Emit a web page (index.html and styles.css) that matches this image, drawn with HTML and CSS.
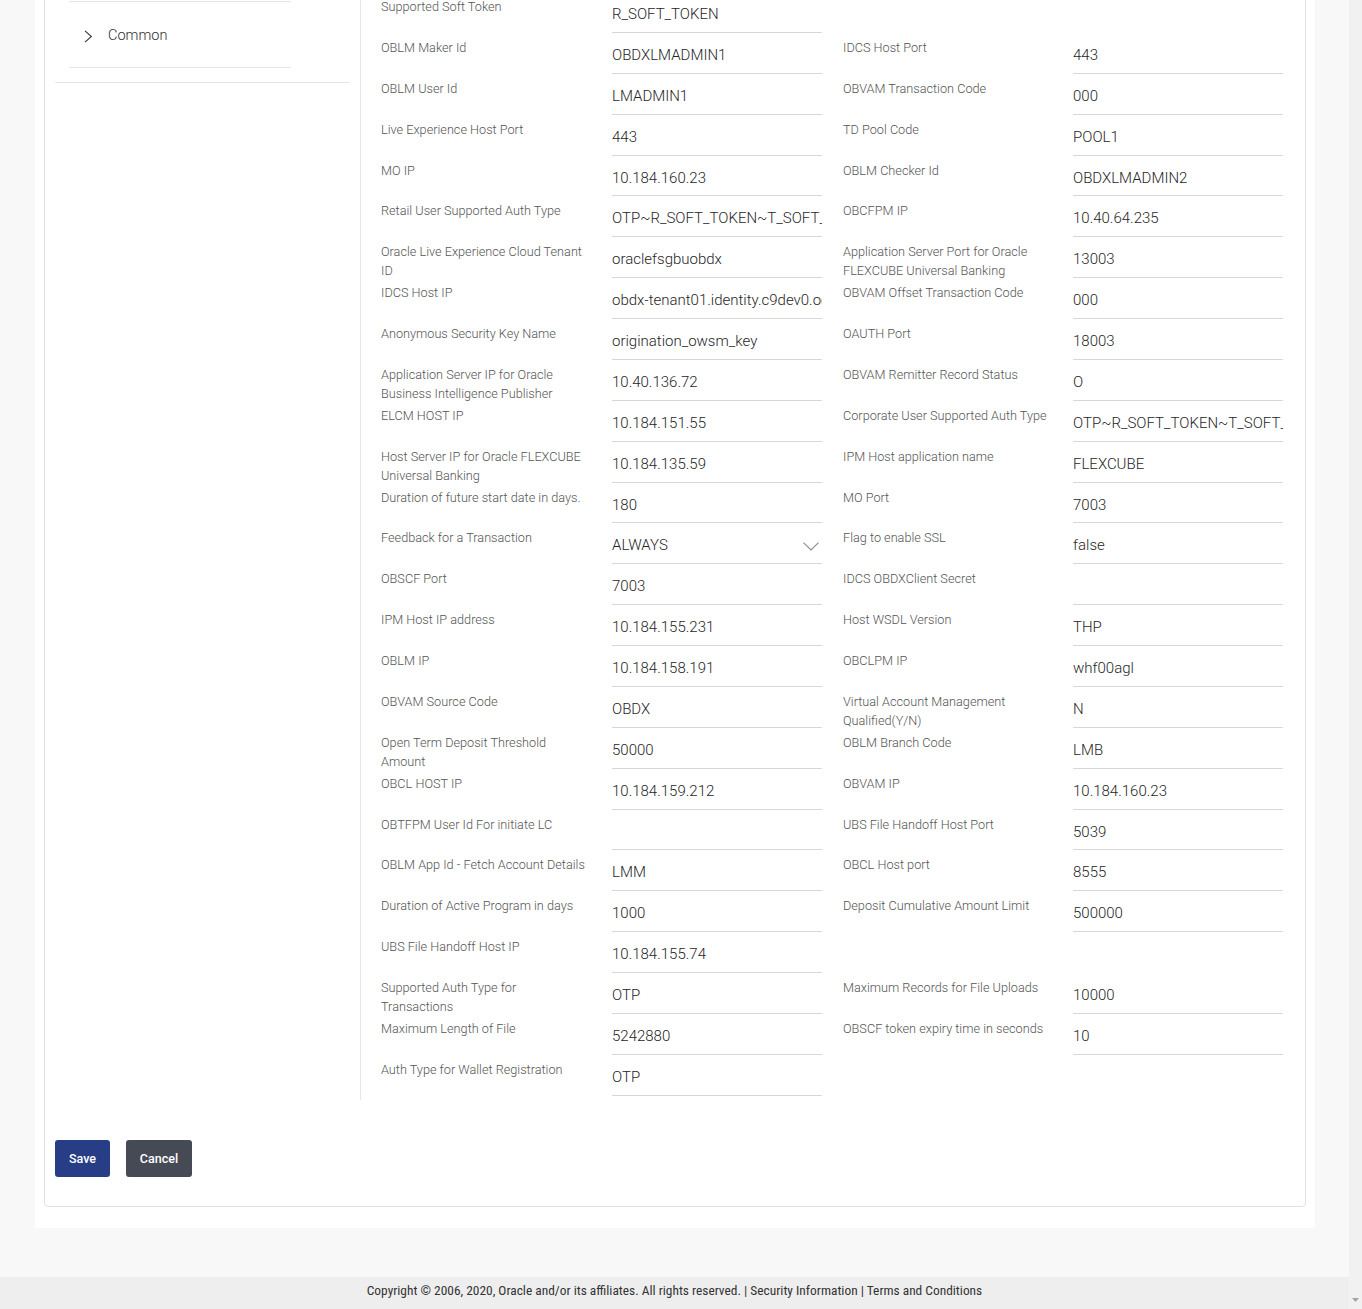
FILE: index.html
```html
<!DOCTYPE html>
<html lang="en">
<head>
<meta charset="utf-8">
<title>System Configuration</title>
<link rel="stylesheet" href="styles.css">
</head>
<body>
<div class="page">
  <div class="shell">
    <div class="card">
      <div class="card-body">
        <aside class="sidebar">
          <div class="menu">
            <div class="menu-item">
              <svg class="chev" width="9" height="13" viewBox="0 0 9 13"><path d="M1 0.8 L7.4 6.5 L1 12.2" fill="none" stroke="#3a3a3a" stroke-width="1.1"/></svg>
              <span>Common</span>
            </div>
          </div>
        </aside>
        <section class="form">
          <div class="field"><div class="label">Supported Soft Token</div><div class="value">R_SOFT_TOKEN</div></div>
          <div class="blank"></div>

          <div class="field"><div class="label">OBLM Maker Id</div><div class="value">OBDXLMADMIN1</div></div>
          <div class="field right"><div class="label">IDCS Host Port</div><div class="value">443</div></div>

          <div class="field"><div class="label">OBLM User Id</div><div class="value">LMADMIN1</div></div>
          <div class="field right"><div class="label">OBVAM Transaction Code</div><div class="value">000</div></div>

          <div class="field"><div class="label">Live Experience Host Port</div><div class="value">443</div></div>
          <div class="field right"><div class="label">TD Pool Code</div><div class="value">POOL1</div></div>

          <div class="field"><div class="label">MO IP</div><div class="value">10.184.160.23</div></div>
          <div class="field right"><div class="label">OBLM Checker Id</div><div class="value">OBDXLMADMIN2</div></div>

          <div class="field"><div class="label">Retail User Supported Auth Type</div><div class="value">OTP~R_SOFT_TOKEN~T_SOFT_TOKEN</div></div>
          <div class="field right"><div class="label">OBCFPM IP</div><div class="value">10.40.64.235</div></div>

          <div class="field"><div class="label">Oracle Live Experience Cloud Tenant ID</div><div class="value">oraclefsgbuobdx</div></div>
          <div class="field right"><div class="label">Application Server Port for Oracle FLEXCUBE Universal Banking</div><div class="value">13003</div></div>

          <div class="field"><div class="label">IDCS Host IP</div><div class="value">obdx-tenant01.identity.c9dev0.oc9qadev.com</div></div>
          <div class="field right"><div class="label">OBVAM Offset Transaction Code</div><div class="value">000</div></div>

          <div class="field"><div class="label">Anonymous Security Key Name</div><div class="value">origination_owsm_key</div></div>
          <div class="field right"><div class="label">OAUTH Port</div><div class="value">18003</div></div>

          <div class="field"><div class="label">Application Server IP for Oracle Business Intelligence Publisher</div><div class="value">10.40.136.72</div></div>
          <div class="field right"><div class="label">OBVAM Remitter Record Status</div><div class="value">O</div></div>

          <div class="field"><div class="label">ELCM HOST IP</div><div class="value">10.184.151.55</div></div>
          <div class="field right"><div class="label">Corporate User Supported Auth Type</div><div class="value">OTP~R_SOFT_TOKEN~T_SOFT_TOKEN</div></div>

          <div class="field"><div class="label">Host Server IP for Oracle FLEXCUBE Universal Banking</div><div class="value">10.184.135.59</div></div>
          <div class="field right"><div class="label">IPM Host application name</div><div class="value">FLEXCUBE</div></div>

          <div class="field"><div class="label">Duration of future start date in days.</div><div class="value">180</div></div>
          <div class="field right"><div class="label">MO Port</div><div class="value">7003</div></div>

          <div class="field"><div class="label">Feedback for a Transaction</div><div class="value select"><span>ALWAYS</span><svg class="caret" width="16" height="9" viewBox="0 0 16 9"><path d="M0.5 0.7 L8 8 L15.5 0.7" fill="none" stroke="#8a8a8a" stroke-width="1.1"/></svg></div></div>
          <div class="field right"><div class="label">Flag to enable SSL</div><div class="value">false</div></div>

          <div class="field"><div class="label">OBSCF Port</div><div class="value">7003</div></div>
          <div class="field right"><div class="label">IDCS OBDXClient Secret</div><div class="value"></div></div>

          <div class="field"><div class="label">IPM Host IP address</div><div class="value">10.184.155.231</div></div>
          <div class="field right"><div class="label">Host WSDL Version</div><div class="value">THP</div></div>

          <div class="field"><div class="label">OBLM IP</div><div class="value">10.184.158.191</div></div>
          <div class="field right"><div class="label">OBCLPM IP</div><div class="value">whf00agl</div></div>

          <div class="field"><div class="label">OBVAM Source Code</div><div class="value">OBDX</div></div>
          <div class="field right"><div class="label">Virtual Account Management Qualified(Y/N)</div><div class="value">N</div></div>

          <div class="field"><div class="label">Open Term Deposit Threshold Amount</div><div class="value">50000</div></div>
          <div class="field right"><div class="label">OBLM Branch Code</div><div class="value">LMB</div></div>

          <div class="field"><div class="label">OBCL HOST IP</div><div class="value">10.184.159.212</div></div>
          <div class="field right"><div class="label">OBVAM IP</div><div class="value">10.184.160.23</div></div>

          <div class="field"><div class="label">OBTFPM User Id For initiate LC</div><div class="value"></div></div>
          <div class="field right"><div class="label">UBS File Handoff Host Port</div><div class="value">5039</div></div>

          <div class="field"><div class="label">OBLM App Id - Fetch Account Details</div><div class="value">LMM</div></div>
          <div class="field right"><div class="label">OBCL Host port</div><div class="value">8555</div></div>

          <div class="field"><div class="label">Duration of Active Program in days</div><div class="value">1000</div></div>
          <div class="field right"><div class="label">Deposit Cumulative Amount Limit</div><div class="value">500000</div></div>

          <div class="field"><div class="label">UBS File Handoff Host IP</div><div class="value">10.184.155.74</div></div>
          <div class="blank"></div>

          <div class="field"><div class="label">Supported Auth Type for Transactions</div><div class="value">OTP</div></div>
          <div class="field right"><div class="label">Maximum Records for File Uploads</div><div class="value">10000</div></div>

          <div class="field"><div class="label">Maximum Length of File</div><div class="value">5242880</div></div>
          <div class="field right"><div class="label">OBSCF token expiry time in seconds</div><div class="value">10</div></div>

          <div class="field"><div class="label">Auth Type for Wallet Registration</div><div class="value">OTP</div></div>
        </section>
      </div>
      <div class="actions">
        <button class="btn btn-primary">Save</button>
        <button class="btn btn-secondary">Cancel</button>
      </div>
    </div>
  </div>
  <footer class="footer">Copyright © 2006, 2020, Oracle and/or its affiliates. All rights reserved. | Security Information | Terms and Conditions</footer>
</div>
<div class="scrollbar">
  <svg class="scroll-arrow" width="7" height="4" viewBox="0 0 7 4"><path d="M0 0 L7 0 L3.5 4 Z" fill="#a3a3a3"/></svg>
</div>
</body>
</html>
```

FILE: styles.css
```css
* { box-sizing: border-box; }

html, body {
  margin: 0;
  height: 1309px;
  overflow: hidden;
}

body {
  display: flex;
  font-family: Roboto, "Noto Sans", "Liberation Sans", sans-serif;
  background: #f8f8f8;
  color: #333;
}

.page {
  width: 1349px;
  height: 1309px;
  display: flex;
  flex-direction: column;
}

.shell {
  margin: -9px 34px 0 35px;
  background: #fff;
  padding: 0 9px 21px 9px;
}

.card {
  border: 1px solid #e2e2e2;
  border-radius: 4px;
  background: #fff;
}

.card-body {
  display: flex;
}

.sidebar {
  width: 315px;
  padding: 9px 10px 0 10px;
}

.menu {
  border-bottom: 1px solid #e6e6e6;
  padding: 0 59px 14px 14px;
}

.menu-item {
  display: flex;
  align-items: center;
  border-top: 1px solid #e6e6e6;
  border-bottom: 1px solid #e6e6e6;
  padding: 23px 0 21px 15px;
  font-size: 14.5px;
  line-height: 21px;
  font-weight: 300;
  color: #2e2e2e;
}

.chev {
  margin-right: 15px;
  margin-top: 2px;
}

.form {
  flex: 1;
  border-left: 1px solid #e6e6e6;
  padding: 0 9px 4px 10px;
  display: grid;
  grid-template-columns: 462px 462px;
  grid-auto-rows: 40.88px;
}

.field {
  display: flex;
  padding-left: 10px;
  min-width: 0;
}

.label {
  width: 207px;
  margin-right: 24px;
  padding-top: 5px;
  font-size: 12.7px;
  line-height: 19px;
  font-weight: 300;
  color: #555;
  flex-shrink: 0;
}

.right .label {
  margin-right: 23px;
}

.value {
  width: 209.5px;
  height: 40.88px;
  padding-top: 12px;
  font-size: 15px;
  line-height: 20px;
  font-weight: 300;
  color: #262626;
  border-bottom: 1px solid #d8d8d8;
  white-space: nowrap;
  overflow: hidden;
}

.select {
  display: flex;
  justify-content: space-between;
  align-items: flex-start;
}

.caret {
  margin-top: 7px;
  margin-right: 3px;
  flex-shrink: 0;
}

.actions {
  display: flex;
  gap: 16px;
  padding: 40px 10px 29px 10px;
}

.btn {
  height: 37px;
  border: none;
  border-radius: 3px;
  color: #fff;
  font-family: Roboto, "Liberation Sans", sans-serif;
  font-size: 12.5px;
  font-weight: 500;
  padding: 0;
}

.btn-primary {
  width: 55px;
  background: #273e87;
}

.btn-secondary {
  width: 66px;
  background: #454a54;
}

.footer {
  margin-top: auto;
  height: 32px;
  background: #eeeeee;
  text-align: center;
  font-family: "Roboto Condensed", "Liberation Sans Narrow", Roboto, sans-serif;
  font-size: 13.4px;
  line-height: 28px;
  color: #333;
}

.scrollbar {
  width: 13px;
  height: 1309px;
  background: #f1f1f1;
  display: flex;
  flex-direction: column;
  justify-content: flex-end;
  align-items: center;
  padding-bottom: 7px;
}
```
